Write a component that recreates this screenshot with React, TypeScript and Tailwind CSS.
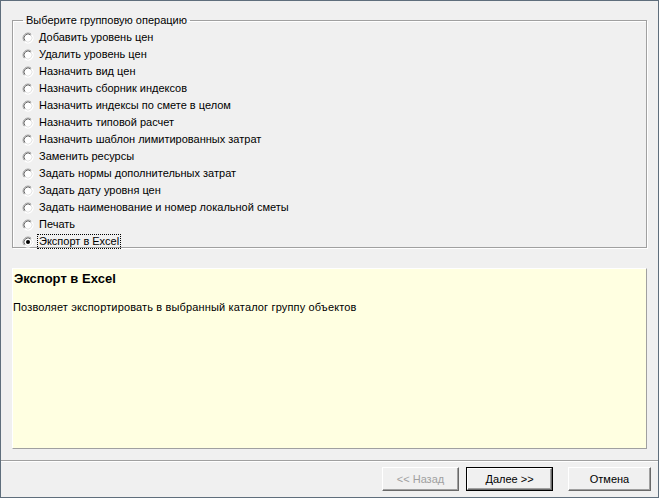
import React, { useState } from 'react';

const operations = [
  'Добавить уровень цен',
  'Удалить уровень цен',
  'Назначить вид цен',
  'Назначить сборник индексов',
  'Назначить индексы по смете в целом',
  'Назначить типовой расчет',
  'Назначить шаблон лимитированных затрат',
  'Заменить ресурсы',
  'Задать нормы дополнительных затрат',
  'Задать дату уровня цен',
  'Задать наименование и номер локальной сметы',
  'Печать',
  'Экспорт в Excel',
];

const descriptions: Record<string, string> = {
  'Экспорт в Excel': 'Позволяет экспортировать в выбранный каталог группу объектов',
};

function RadioMark({ checked }: { checked: boolean }) {
  return (
    <svg width="12" height="12" viewBox="0 0 12 12" className="shrink-0">
      <circle cx="6" cy="6" r="5.5" fill="#ffffff" />
      <path d="M2.46 9.54 A5 5 0 0 1 9.54 2.46" fill="none" stroke="#a0a0a0" strokeWidth="1" />
      <path d="M3.17 8.83 A4 4 0 0 1 8.83 3.17" fill="none" stroke="#696969" strokeWidth="1" />
      <path d="M9.54 2.46 A5 5 0 0 1 2.46 9.54" fill="none" stroke="#ffffff" strokeWidth="1" />
      <path d="M8.83 3.17 A4 4 0 0 1 3.17 8.83" fill="none" stroke="#e3e3e3" strokeWidth="1" />
      {checked && <circle cx="6" cy="6" r="2" fill="#000000" />}
    </svg>
  );
}

function Button({ label, disabled, isDefault }: { label: string; disabled?: boolean; isDefault?: boolean }) {
  return (
    <div className={isDefault ? 'h-full border border-black' : 'h-full'}>
      <div
        className={`flex items-center justify-center h-full border-t border-l border-t-white border-l-white border-r border-b border-r-[#696969] border-b-[#696969] shadow-[inset_-1px_-1px_0_#a0a0a0] ${
          disabled ? 'text-[#a0a0a0]' : 'text-black'
        }`}
      >
        {label}
      </div>
    </div>
  );
}

export default function App() {
  const [selected, setSelected] = useState('Экспорт в Excel');

  return (
    <div
      className="w-[659px] h-[498px] bg-[#f0f0f0] border border-[#5f6e7c] flex flex-col text-[11px] text-black"
      style={{ fontFamily: '"Liberation Sans", Arial, sans-serif' }}
    >
      <div className="px-[11px] pt-[13px]">
        <fieldset className="h-[234px] border border-[#a0a0a0] shadow-[inset_1px_1px_0_#ffffff,1px_1px_0_#ffffff] m-0 p-0">
          <legend className="ml-[10px] px-[3px] leading-[13px]">Выберите групповую операцию</legend>
          <div className="flex flex-col pl-[9px] pt-[2px]">
            {operations.map(op => {
              const isSel = selected === op;
              return (
                <div
                  key={op}
                  className="flex items-center h-[17px] cursor-default"
                  onClick={() => setSelected(op)}
                >
                  <RadioMark checked={isSel} />
                  <span
                    className={`ml-[3px] px-[1px] leading-[13px] border border-dotted ${
                      isSel ? 'border-black' : 'border-transparent'
                    }`}
                  >
                    {op}
                  </span>
                </div>
              );
            })}
          </div>
        </fieldset>

        <div className="mt-[20px] h-[181px] bg-[#ffffe1] border-t border-l border-t-white border-l-white border-r border-b border-r-[#a0a0a0] border-b-[#a0a0a0] pl-[1px] pt-[2px]">
          <div className="font-bold text-[13px] leading-[16px]">{selected}</div>
          <div className="mt-[14px] leading-[13px] -ml-[1px] tracking-[0.15px]">{descriptions[selected] || ''}</div>
        </div>
      </div>

      <div className="mt-[11px] h-[2px] border-t border-t-[#a0a0a0] border-b border-b-white" />

      <div className="flex justify-end gap-[7px] pr-[7px] pt-[5px]">
        <div className="w-[77px] h-[24px]">
          <Button label="<< Назад" disabled />
        </div>
        <div className="w-[87px] h-[24px] mr-[8px]">
          <Button label="Далее >>" isDefault />
        </div>
        <div className="w-[83px] h-[24px]">
          <Button label="Отмена" />
        </div>
      </div>
    </div>
  );
}
